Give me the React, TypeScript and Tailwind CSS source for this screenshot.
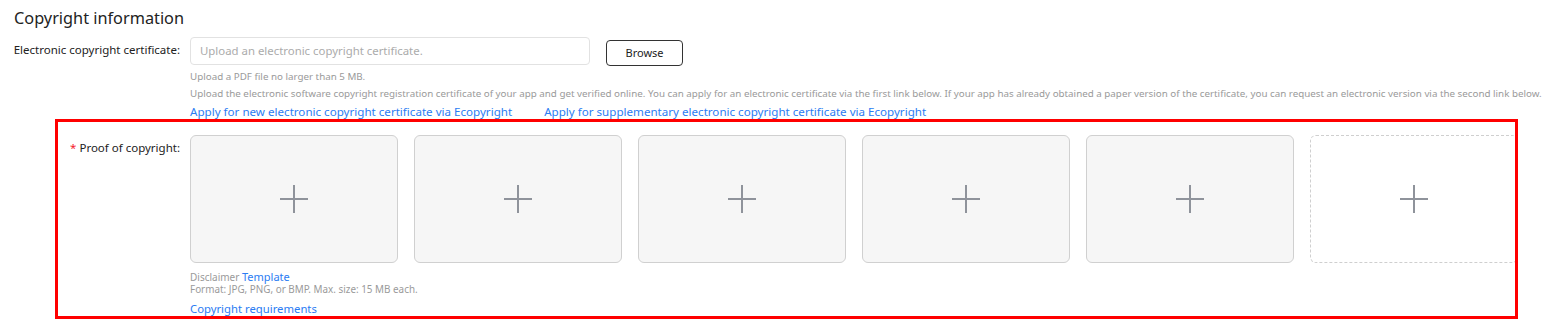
const SLOTS = [0, 1, 2, 3, 4];

function PlusMark() {
  return (
    <svg width="30" height="30" viewBox="0 0 30 30" fill="none" stroke="#8f939b" strokeWidth="2">
      <path d="M15 1v28M1 15h28" />
    </svg>
  );
}

function UploadSlot({ dashed }: { dashed?: boolean }) {
  return (
    <div
      className={
        dashed
          ? "flex h-[128px] w-[208px] shrink-0 items-center justify-center rounded-md border border-dashed border-[#cfcfcf] bg-white"
          : "flex h-[128px] w-[208px] shrink-0 items-center justify-center rounded-md border border-[#d0d0d0] bg-[#f6f6f6]"
      }
    >
      <PlusMark />
    </div>
  );
}

export default function App() {
  return (
    <div className="relative h-[330px] w-[1557px] overflow-hidden bg-white font-['Noto_Sans',sans-serif] text-[#222]">
      {/* Section title */}
      <div className="pl-[14px] pt-[6px] text-[16.3px] leading-[24px] text-[#222]">Copyright information</div>

      {/* Electronic certificate row */}
      <div className="mt-[7px] flex">
        <div className="w-[180px] shrink-0 pt-[4px] text-right text-[11.5px] leading-[18px] text-[#222]">
          Electronic copyright certificate:
        </div>
        <div className="ml-[10px] flex flex-col">
          <div className="flex items-start">
            <div className="flex h-[28px] w-[400px] items-center rounded border border-[#e2e2e2] px-[9px] text-[11.4px] text-[#ababab]">
              Upload an electronic copyright certificate.
            </div>
            <button className="ml-[16px] mt-[3px] h-[26px] w-[77px] rounded border border-[#333] bg-white text-[11px] text-[#222]">
              Browse
            </button>
          </div>
          <div className="mt-[2px] text-[9.8px] leading-[17px] text-[#9a9a9a]">Upload a PDF file no larger than 5 MB.</div>
          <div className="whitespace-nowrap text-[9.8px] leading-[17px] text-[#9a9a9a]">
            Upload the electronic software copyright registration certificate of your app and get verified online. You can apply for an electronic certificate via the first link below. If your app has already obtained a paper version of the certificate, you can request an electronic version via the second link below.
          </div>
          <div className="flex gap-[32px] text-[11.6px] leading-[20px] text-[#2b7cf3]">
            <span>Apply for new electronic copyright certificate via Ecopyright</span>
            <span>Apply for supplementary electronic copyright certificate via Ecopyright</span>
          </div>
        </div>
      </div>

      {/* Proof of copyright row */}
      <div className="mt-[13px] flex">
        <div className="w-[180px] shrink-0 pt-[4px] text-right text-[11.5px] leading-[18px] text-[#222]">
          <span className="text-[#f5222d]">* </span>Proof of copyright:
        </div>
        <div className="ml-[10px] flex flex-col">
          <div className="flex gap-[16px]">
            {SLOTS.map((i) => (
              <UploadSlot key={i} />
            ))}
            <UploadSlot dashed />
          </div>
          <div className="mt-[8px] text-[10px] leading-[12px] text-[#9a9a9a]">
            Disclaimer <span className="text-[11px] text-[#2b7cf3]">Template</span>
          </div>
          <div className="text-[9.9px] leading-[12px] text-[#9a9a9a]">Format: JPG, PNG, or BMP. Max. size: 15 MB each.</div>
          <div className="mt-[7px] text-[11.3px] leading-[14px] text-[#2b7cf3]">Copyright requirements</div>
        </div>
      </div>

      {/* Highlight annotation */}
      <div className="pointer-events-none absolute left-[55px] top-[119px] h-[200px] w-[1463px] border-[3px] border-[#ff0000]" />
    </div>
  );
}
